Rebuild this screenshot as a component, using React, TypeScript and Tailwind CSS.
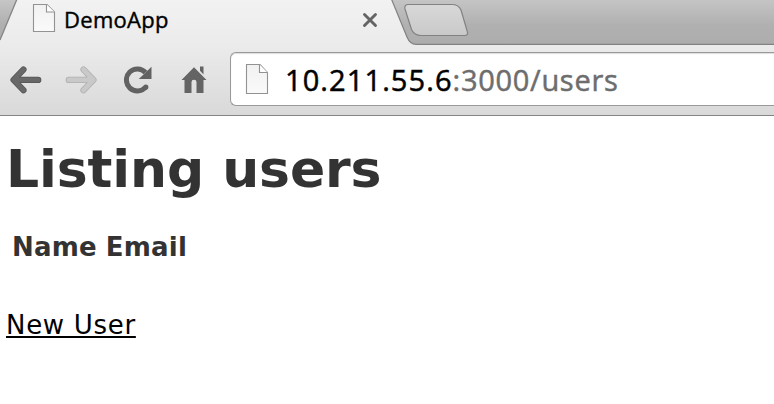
function PageIcon({ className }: { className: string }) {
  return (
    <svg className={className} viewBox="0 0 24 32" preserveAspectRatio="none" fill="none">
      <defs>
        <linearGradient id="paper" x1="0" y1="0" x2="0" y2="1">
          <stop offset="0" stopColor="#f1f1f1" />
          <stop offset="1" stopColor="#fafafa" />
        </linearGradient>
      </defs>
      <path d="M1.5 1.5H15L22.5 9.5V30.5H1.5Z" fill="url(#paper)" stroke="#929292" strokeWidth="1.1" />
      <path d="M14.5 1.5V9.5H22.5" fill="#fff" stroke="#929292" strokeWidth="1.1" />
    </svg>
  );
}

function TabShapes() {
  return (
    <svg className="absolute inset-0" width="774" height="46" viewBox="0 0 774 46" fill="none">
      <defs>
        <linearGradient id="strip" x1="0" y1="0" x2="0" y2="1">
          <stop offset="0" stopColor="#c6c6c6" />
          <stop offset="0.6" stopColor="#b0b0b0" />
          <stop offset="1" stopColor="#adadad" />
        </linearGradient>
        <linearGradient id="newtab" x1="0" y1="0" x2="0" y2="1">
          <stop offset="0" stopColor="#d8d8d8" />
          <stop offset="1" stopColor="#c9c9c9" />
        </linearGradient>
      </defs>
      <path d="M0 0H17L0 40Z" fill="url(#strip)" />
      <path d="M17 -1L0 40" stroke="#868686" strokeWidth="1.3" />
      <path d="M391 -2L407 37Q410 44.3 416 44.3H775V-2Z" fill="url(#strip)" stroke="#828282" strokeWidth="1.2" />
      <path
        d="M408.5 4.5H452Q458.5 4.5 461 10L467 30.5Q469 35.5 464.5 35.5H421Q414.5 35.5 411.5 29.5L405 9Q404 4.5 408.5 4.5Z"
        fill="url(#newtab)"
        stroke="#828282"
        strokeWidth="1.2"
      />
    </svg>
  );
}

function BackIcon({ light = false }: { light?: boolean }) {
  return (
    <svg width="32" height="28" viewBox="0 0 32 28" className={light ? "-scale-x-100" : ""}>
      <path
        d="M13.4 3.6L3.6 13.9L13.4 24.2M5 13.9H28.2"
        fill="none"
        stroke={light ? "#aeaeae" : "#555"}
        strokeWidth="6.3"
        strokeLinecap="round"
        strokeLinejoin="round"
      />
      <path
        d="M13.4 3.6L3.6 13.9L13.4 24.2M5 13.9H28.2"
        fill="none"
        stroke={light ? "#c9c9c9" : "#686868"}
        strokeWidth="4.8"
        strokeLinecap="round"
        strokeLinejoin="round"
      />
    </svg>
  );
}

function ReloadIcon() {
  return (
    <svg width="28" height="28" viewBox="0 0 28 28" fill="none">
      <path d="M21.5 21.4A11 11 0 1 1 21.5 6.5" stroke="#626262" strokeWidth="5" />
      <circle cx="21.8" cy="21.1" r="2.6" fill="#626262" />
      <path d="M27.5 .7V13H14.8L19.5 8.4Z" fill="#626262" />
    </svg>
  );
}

function HomeIcon() {
  return (
    <svg width="26" height="28" viewBox="0 0 26 28" fill="#646464">
      <path d="M13 1.2L25.5 14H22.5V27H15.5V16Q15.5 13.8 13 13.8T10.5 16V27H3.5V14H.5Z" />
      <path d="M19 .5H22.5V8.5L19 4.8Z" />
    </svg>
  );
}

export default function App() {
  return (
    <div className="h-[404px] w-[774px] overflow-hidden bg-white">
      <header className="flex h-[116px] flex-col border-b-[1.5px] border-[#858585] bg-linear-to-b from-[#f2f2f2] from-0% via-[#ebebeb] via-40% to-[#d9d9d9] font-['Open_Sans','Noto_Sans',sans-serif]">
        <div className="relative h-[45px] shrink-0">
          <TabShapes />
          <div className="relative flex h-[40px] w-[380px] items-center pl-8">
            <PageIcon className="-mt-1 h-[30px] w-6" />
            <span className="-mt-[2px] ml-2 flex-1 text-[22px] leading-none tracking-[0.3px] text-black [-webkit-text-stroke:0.4px_#000]">DemoApp</span>
            <svg width="16" height="16" viewBox="0 0 16 16" className="mr-[2px]">
              <path d="M2.5 2.5L13.5 13.5M13.5 2.5L2.5 13.5" stroke="#646464" strokeWidth="2.9" strokeLinecap="round" />
            </svg>
          </div>
        </div>
        <div className="flex items-start pt-[7px] pl-[10px]">
          <nav className="flex w-[220px] items-center pt-[13.5px]">
            <BackIcon />
            <span className="ml-[23px] flex"><BackIcon light /></span>
            <span className="ml-[27px] flex"><ReloadIcon /></span>
            <span className="ml-[29px] flex"><HomeIcon /></span>
          </nav>
          <div className="flex h-[54px] flex-1 items-center rounded-l-[6px] border border-r-0 border-[#999] bg-white pl-[14px] shadow-[inset_0_1px_1px_#ddd]">
            <PageIcon className="h-8 w-6" />
            <span className="ml-4 text-[29px] leading-none tracking-[1.1px] whitespace-nowrap text-black [-webkit-text-stroke:0.5px_currentColor]">
              10.211.55.6<span className="tracking-[0.7px] text-[#6d6d6d] [-webkit-text-stroke:0.5px_#6d6d6d]">:3000/users</span>
            </span>
          </div>
        </div>
      </header>
      <main className="px-[6px] pt-[22px] font-['DejaVu_Sans',Verdana,sans-serif]">
        <h1 className="text-[52px] leading-[62px] font-bold tracking-[-0.1px] whitespace-nowrap text-[#333]">Listing users</h1>
        <table className="mt-[30px] ml-[6px] text-[26px] leading-[34px] tracking-[0.2px] text-[#333]">
          <thead>
            <tr>
              <th className="pr-[9px] text-left">Name</th>
              <th className="text-left">Email</th>
            </tr>
          </thead>
        </table>
        <a
          href="#new"
          className="mt-[47px] inline-block text-[26px] leading-[29px] tracking-[0.7px] text-black underline decoration-2 underline-offset-[2px]"
        >
          New User
        </a>
      </main>
    </div>
  );
}
